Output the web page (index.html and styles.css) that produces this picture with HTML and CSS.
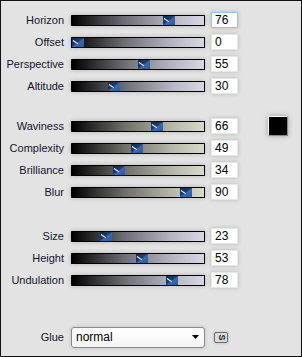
FILE: index.html
```html
<!DOCTYPE html>
<html lang="en">
<head>
    <meta charset="UTF-8">
    <title>Wave Settings</title>
    <link rel="stylesheet" href="styles.css">
</head>
<body>
    <div class="panel">
        <div class="group cool">
            <div class="row"><span class="label">Horizon</span><div class="track"><span class="thumb" style="--v:76"></span></div><div class="value focused">76</div></div>
            <div class="row"><span class="label">Offset</span><div class="track"><span class="thumb" style="--v:0"></span></div><div class="value">0</div></div>
            <div class="row"><span class="label">Perspective</span><div class="track"><span class="thumb" style="--v:55"></span></div><div class="value">55</div></div>
            <div class="row"><span class="label">Altitude</span><div class="track"><span class="thumb" style="--v:30"></span></div><div class="value">30</div></div>
        </div>

        <div class="group warm">
            <div class="row"><span class="label">Waviness</span><div class="track"><span class="thumb" style="--v:66"></span></div><div class="value">66</div><div class="swatch"></div></div>
            <div class="row"><span class="label">Complexity</span><div class="track"><span class="thumb" style="--v:49"></span></div><div class="value">49</div></div>
            <div class="row"><span class="label">Brilliance</span><div class="track"><span class="thumb" style="--v:34"></span></div><div class="value">34</div></div>
            <div class="row"><span class="label">Blur</span><div class="track"><span class="thumb" style="--v:90"></span></div><div class="value">90</div></div>
        </div>

        <div class="group cool third">
            <div class="row"><span class="label">Size</span><div class="track"><span class="thumb" style="--v:23"></span></div><div class="value">23</div></div>
            <div class="row"><span class="label">Height</span><div class="track"><span class="thumb" style="--v:53"></span></div><div class="value">53</div></div>
            <div class="row"><span class="label">Undulation</span><div class="track"><span class="thumb" style="--v:78"></span></div><div class="value">78</div></div>
        </div>

        <div class="row glue-row">
            <span class="label">Glue</span>
            <div class="select">
                <span>normal</span>
                <svg class="arrow" width="7" height="4" viewBox="0 0 7 4"><polygon points="0,0 7,0 3.5,4" fill="#000"/></svg>
            </div>
            <div class="s-button"><span>S</span></div>
        </div>
    </div>
</body>
</html>
```

FILE: styles.css
```css
* {
    margin: 0;
    padding: 0;
    box-sizing: border-box;
}

body {
    font-family: 'Liberation Sans', Arial, sans-serif;
    background: #e3e3e3;
}

.panel {
    width: 302px;
    height: 357px;
    border: 1px solid #111;
    background: #e3e3e3;
    padding-top: 8px;
}

.row {
    display: flex;
    align-items: center;
    height: 22px;
}

.label {
    width: 63px;
    margin-right: 7px;
    text-align: right;
    font-size: 11px;
    color: #14142e;
}

.track {
    position: relative;
    width: 134px;
    height: 11px;
    border: 1px solid #000;
    box-shadow: 0 0 4px rgba(0, 0, 0, 0.22);
}

.cool .track {
    background: linear-gradient(to right, #000 0%, #6e6f76 40%, #b4b5c0 75%, #d6d8e4 100%);
}

.warm .track {
    background: linear-gradient(to right, #000 0%, #6f6f68 40%, #b5b6a8 75%, #d8dac8 100%);
}

.thumb {
    position: absolute;
    top: 0;
    left: calc((100% - 12px) * var(--v) / 100);
    width: 12px;
    height: 9px;
    background: linear-gradient(to bottom right, #14284a 0%, #1f3c6c 45%, #3a6aae 55%, #2c5a9a 100%);
}

.thumb::before {
    content: '';
    position: absolute;
    left: 1px;
    top: 2px;
    width: 6px;
    height: 1px;
    background: #fff;
    transform: rotate(35deg);
    transform-origin: left center;
}

.value {
    width: 27px;
    height: 16px;
    margin-left: 6px;
    padding-left: 3px;
    background: #fff;
    border: 1px solid #e8e8e8;
    box-shadow: 0 0 4px rgba(0, 0, 0, 0.2);
    font-family: 'Liberation Sans Narrow', 'Liberation Sans', sans-serif;
    font-size: 12px;
    line-height: 14px;
    color: #000;
}

.value.focused {
    border-color: #9fc3e6;
}

.swatch {
    width: 20px;
    height: 20px;
    margin-left: 30px;
    background: #000;
    border: 1px solid #fff;
    border-right-color: #888;
    border-bottom-color: #888;
    box-shadow: 0 0 5px rgba(0, 0, 0, 0.3);
}

.warm {
    margin-top: 18px;
}

.third {
    margin-top: 22px;
}

.glue-row {
    margin-top: 35px;
}

.select {
    display: flex;
    align-items: center;
    justify-content: space-between;
    width: 134px;
    height: 21px;
    padding: 0 5px 0 4px;
    border: 1px solid #8a8a8a;
    border-radius: 3px;
    background: linear-gradient(to bottom, #fff 0%, #f4f4f4 100%);
    box-shadow: 0 0 4px rgba(0, 0, 0, 0.15);
    font-family: 'Liberation Sans Narrow', 'Liberation Sans', sans-serif;
    font-size: 12px;
    color: #000;
}

.s-button {
    display: flex;
    align-items: center;
    justify-content: center;
    width: 14px;
    height: 11px;
    margin-left: 9px;
    border: 1px solid #6a6a6a;
    border-radius: 2px;
    background: #dcdcdc;
    box-shadow: 0 0 3px rgba(0, 0, 0, 0.2);
}

.s-button span {
    display: block;
    font-size: 9px;
    font-weight: bold;
    line-height: 9px;
    color: #222;
    transform: rotate(90deg);
}
```
